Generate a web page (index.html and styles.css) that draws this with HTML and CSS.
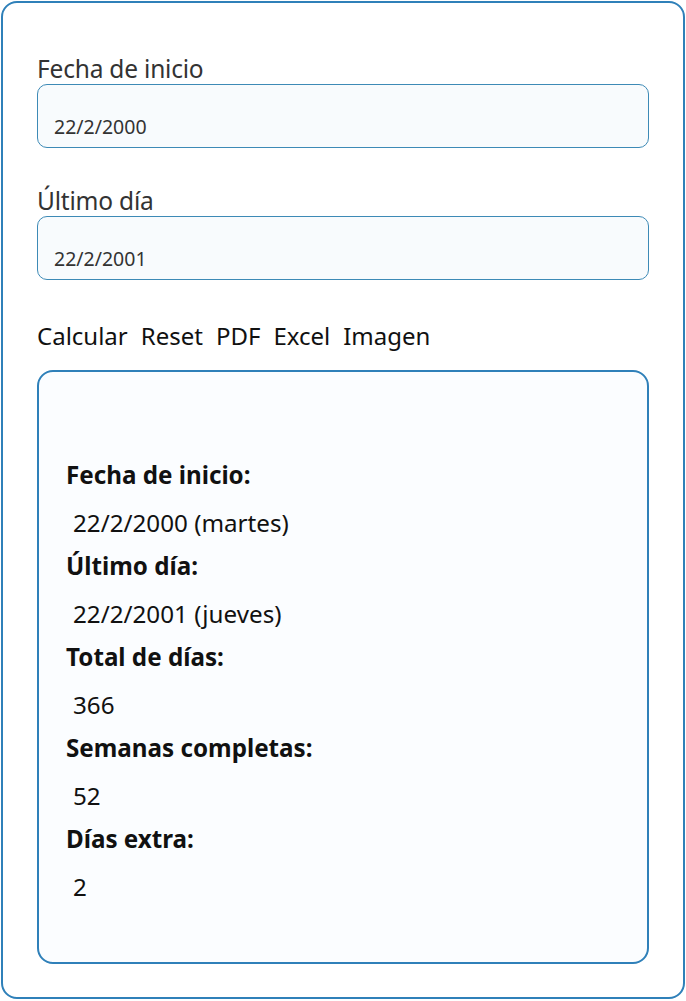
FILE: index.html
```html
<!DOCTYPE html>
<html lang="es">
<head>
    <meta charset="UTF-8">
    <meta name="viewport" content="width=device-width, initial-scale=1.0">
    <title>Calculadora de días</title>
    <link rel="stylesheet" href="styles.css">
</head>
<body>
    <div class="card">
        <div class="field">
            <label for="start">Fecha de inicio</label>
            <div class="input" id="start">22/2/2000</div>
        </div>
        <div class="field">
            <label for="end">Último día</label>
            <div class="input" id="end">22/2/2001</div>
        </div>
        <div class="actions">
            <button>Calcular</button>
            <button>Reset</button>
            <button>PDF</button>
            <button>Excel</button>
            <button>Imagen</button>
        </div>
        <div class="result">
            <div class="row">
                <div class="key">Fecha de inicio:</div>
                <div class="value">22/2/2000 (martes)</div>
            </div>
            <div class="row">
                <div class="key">Último día:</div>
                <div class="value">22/2/2001 (jueves)</div>
            </div>
            <div class="row">
                <div class="key">Total de días:</div>
                <div class="value">366</div>
            </div>
            <div class="row">
                <div class="key">Semanas completas:</div>
                <div class="value">52</div>
            </div>
            <div class="row">
                <div class="key">Días extra:</div>
                <div class="value">2</div>
            </div>
        </div>
    </div>
</body>
</html>
```

FILE: styles.css
```css
body {
    font-family: "Noto Sans", "Open Sans", sans-serif;
    margin: 0;
    background: #fff;
}

.card {
    margin: 1px;
    height: 998px;
    box-sizing: border-box;
    border: 2px solid #2f80b9;
    border-radius: 16px;
    padding: 51px 34px 0;
}

.field {
    margin-bottom: 38px;
}

.field label {
    display: block;
    font-size: 24.5px;
    line-height: 30px;
    letter-spacing: -0.2px;
    color: #333;
}

.input {
    height: 64px;
    box-sizing: border-box;
    border: 1px solid #3d8ab6;
    border-radius: 10px;
    background: #f8fbfd;
    padding: 28px 16px 0;
    font-size: 19.5px;
    line-height: 28px;
    color: #333;
}

.actions {
    display: flex;
    gap: 13px;
    padding-top: 3px;
    margin-bottom: 19px;
}

.actions button {
    border: none;
    background: none;
    padding: 0;
    font-family: inherit;
    font-size: 24px;
    line-height: 30px;
    color: #111;
}

.result {
    height: 594px;
    box-sizing: border-box;
    border: 2px solid #2f80b9;
    border-radius: 16px;
    background: #fbfdff;
    padding: 88px 27px 0;
}

.row .key {
    font-weight: bold;
    font-size: 24.2px;
    line-height: 30px;
    color: #111;
}

.row .value {
    font-size: 24.2px;
    line-height: 30px;
    padding: 18px 0 13px 7px;
    color: #111;
}
```
